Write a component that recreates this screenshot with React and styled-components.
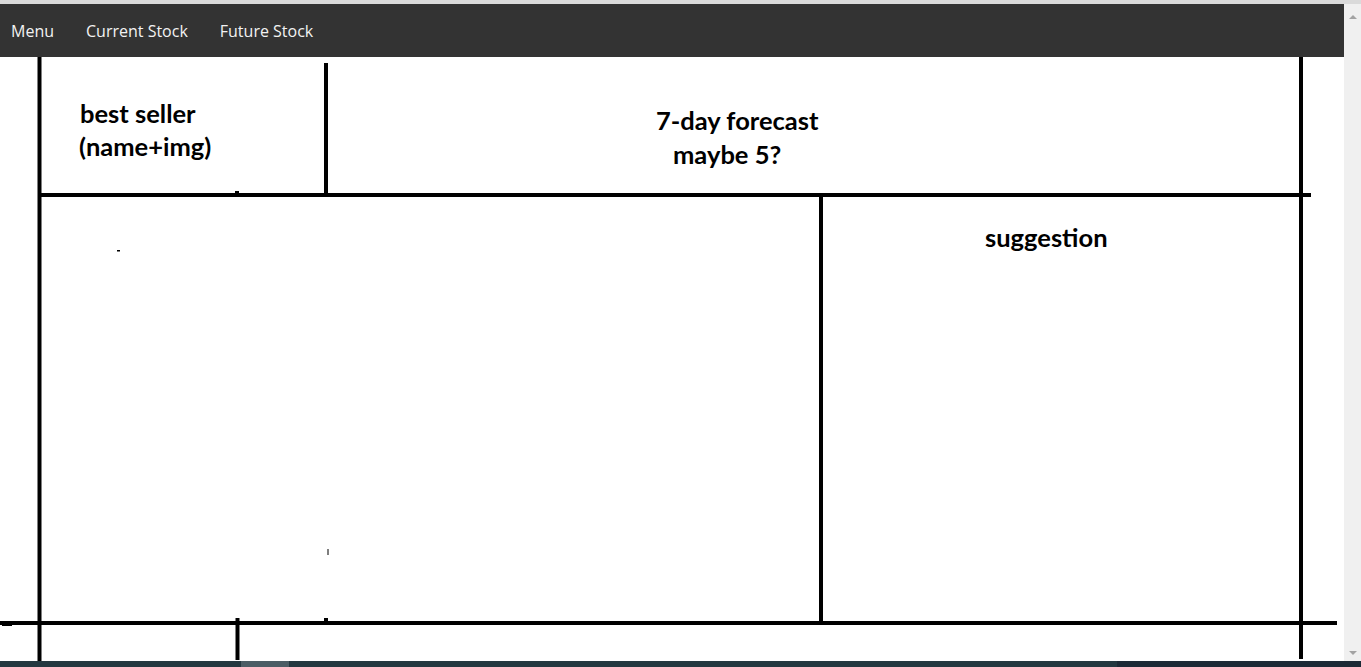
import React from 'react';
import styled, { createGlobalStyle } from 'styled-components';

const GlobalStyle = createGlobalStyle`
  html, body {
    margin: 0;
    padding: 0;
    overflow: hidden;
    background: #ffffff;
  }
`;

const Shell = styled.div`
  display: flex;
  flex-direction: column;
  width: 100vw;
  height: 100vh;
`;

const TopEdge = styled.div`
  height: 4px;
  background: #dadada;
  flex: none;
`;

const Viewport = styled.div`
  flex: 1;
  display: flex;
  min-height: 0;
`;

const Page = styled.div`
  flex: 1;
  display: flex;
  flex-direction: column;
  min-width: 0;
`;

const NavBar = styled.nav`
  height: 53px;
  flex: none;
  background: #333333;
  display: flex;
  align-items: center;
  gap: 32px;
  padding-left: 11px;
`;

const NavLink = styled.a`
  font-family: 'Open Sans', 'DejaVu Sans', sans-serif;
  font-size: 16px;
  color: #f2f2f2;
  text-decoration: none;
  cursor: pointer;
`;

const Sketch = styled.div`
  flex: 1;
  background: #ffffff;
  overflow: hidden;

  svg {
    display: block;
  }
`;

const Label = styled.text`
  font-family: Lato, 'Open Sans', sans-serif;
  font-weight: 700;
  font-size: 25.5px;
  fill: #000000;
`;

const Scrollbar = styled.div`
  width: 17px;
  flex: none;
  background: #f0f0f0;
  display: flex;
  flex-direction: column;
  justify-content: space-between;
  align-items: center;
  padding: 11px 0 6px;
  box-sizing: border-box;
`;

const Arrow = styled.span`
  width: 0;
  height: 0;
  border-left: 4px solid transparent;
  border-right: 4px solid transparent;
  ${p =>
    p.down
      ? 'border-top: 4px solid #a3a3a3;'
      : 'border-bottom: 4px solid #a3a3a3;'}
`;

const Taskbar = styled.div`
  height: 6px;
  flex: none;
  display: flex;
  background: #233840;
`;

const TaskSegment = styled.div`
  width: ${p => p.w}px;
  background: ${p => p.bg || 'transparent'};
`;

// hand drawn wireframe strokes, in sketch coordinates
const strokes = [
  { x1: 39.5, y1: 0, x2: 39.5, y2: 606 },
  { x1: 326, y1: 6, x2: 326, y2: 140 },
  { x1: 40, y1: 138, x2: 1311, y2: 138 },
  { x1: 1301, y1: 0, x2: 1301, y2: 602 },
  { x1: 821, y1: 139, x2: 821, y2: 568 },
  { x1: 0, y1: 566, x2: 1337, y2: 566 },
  { x1: 237.5, y1: 561, x2: 237.5, y2: 603 },
];

function WireframeSketch() {
  return (
    <svg width="1344" height="604" viewBox="0 0 1344 604">
      {strokes.map((s, i) => (
        <line key={i} {...s} stroke="#000" strokeWidth="4" />
      ))}
      <rect x="324" y="561" width="4" height="4" fill="#000" />
      <rect x="235" y="134" width="4" height="2" fill="#000" />
      <rect x="235.5" y="140" width="3" height="1.5" fill="#fff" />
      <rect x="327.5" y="492" width="1" height="6" fill="#000" />
      <rect x="117" y="193" width="3" height="1.5" fill="#000" />
      <rect x="2" y="565" width="10" height="4" fill="#000" />

      <Label x="80" y="66">best seller</Label>
      <Label x="79" y="99">(name+img)</Label>
      <Label x="656" y="73">7-day forecast</Label>
      <Label x="673" y="106.5">maybe 5?</Label>
      <Label x="985" y="190">suggestion</Label>
    </svg>
  );
}

export default function App() {
  return (
    <Shell>
      <GlobalStyle />
      <TopEdge />
      <Viewport>
        <Page>
          <NavBar>
            <NavLink>Menu</NavLink>
            <NavLink>Current Stock</NavLink>
            <NavLink>Future Stock</NavLink>
          </NavBar>
          <Sketch>
            <WireframeSketch />
          </Sketch>
        </Page>
        <Scrollbar>
          <Arrow />
          <Arrow down />
        </Scrollbar>
      </Viewport>
      <Taskbar>
        <TaskSegment w={241} />
        <TaskSegment w={48} bg="#4b5d65" />
        <TaskSegment w={828} />
        <TaskSegment w={244} bg="#1c2a36" />
      </Taskbar>
    </Shell>
  );
}
